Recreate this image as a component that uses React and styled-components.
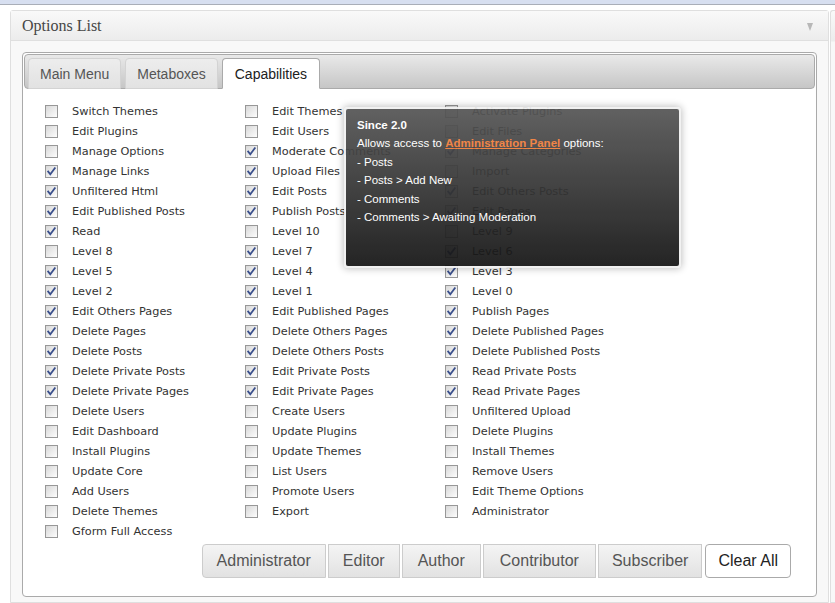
import React from "react";
import styled, { createGlobalStyle } from "styled-components";

const GlobalStyle = createGlobalStyle`
  html, body { margin: 0; padding: 0; background: #fff; }
  body { font-family: "DejaVu Sans", Verdana, sans-serif; }
`;

const Page = styled.div`
  width: 835px;
  height: 603px;
  overflow: hidden;
  display: flex;
  flex-direction: column;
`;

const TopStrip = styled.div`
  height: 4px;
  background: #d7dff0;
  border-bottom: 1px solid #a9aeb8;
  flex: none;
`;

const Stage = styled.div`
  display: flex;
  gap: 1px;
  padding: 5px 0 0 10px;
  flex: 1;
  min-height: 0;
`;

const Panel = styled.div`
  width: 819px;
  box-sizing: border-box;
  border: 1px solid #dfdfdf;
  border-radius: 3px 3px 0 0;
  background: #f8f8f8;
  flex: none;
`;

const SidePanel = styled.div`
  flex: 1;
  border: 1px solid #dfdfdf;
  border-right: none;
  border-radius: 3px 0 0 0;
  background: linear-gradient(#f9f9f9, #ececec 30px, #f8f8f8 31px);
`;

const PanelHeader = styled.div`
  height: 29px;
  border-bottom: 1px solid #dfdfdf;
  background: linear-gradient(#f9f9f9, #ececec);
  display: flex;
  align-items: center;
  justify-content: space-between;
  padding: 0 15px 0 11px;
  font-family: "Liberation Serif", "Times New Roman", serif;
  font-size: 16px;
  color: #464646;
`;

const Arrow = styled.span`
  width: 0;
  height: 0;
  border-left: 3.5px solid transparent;
  border-right: 3.5px solid transparent;
  border-top: 8px solid #b8b8b8;
  margin-top: 2px;
`;

const PanelBody = styled.div`
  padding: 11px 11px 0 11px;
`;

const TabsBox = styled.div`
  position: relative;
  border: 1px solid #aaaaaa;
  border-radius: 4px;
  background: #fff;
  padding: 1px;
`;

const TabBar = styled.div`
  display: flex;
  align-items: flex-end;
  gap: 4px;
  padding: 3px 3px 0;
  border: 1px solid #aaaaaa;
  border-radius: 4px;
  background: linear-gradient(#e9e9e9, #c6c6c6);
`;

const Tab = styled.div`
  height: 31px;
  margin-bottom: -1px;
  box-sizing: border-box;
  display: flex;
  align-items: center;
  padding: 0 ${(p) => (p.$active ? 12 : 11)}px;
  border: 1px solid ${(p) => (p.$active ? "#aaaaaa" : "#d3d3d3")};
  border-bottom: ${(p) => (p.$active ? "1px solid #fff" : "1px solid #d3d3d3")};
  border-radius: 4px 4px 0 0;
  background: ${(p) => (p.$active ? "#fff" : "linear-gradient(#ededed, #e2e2e2)")};
  font-family: "Liberation Sans", Arial, sans-serif;
  font-size: 14px;
  color: ${(p) => (p.$active ? "#212121" : "#555")};
`;

const Content = styled.div`
  padding: 12px 22px 17px 21px;
`;

const Columns = styled.div`
  display: flex;
`;

const Column = styled.div`
  width: 200px;
  display: flex;
  flex-direction: column;
`;

const Item = styled.div`
  height: 20px;
  display: flex;
  align-items: center;
  gap: 14px;
  font-size: 11.3px;
  color: #333;
  white-space: nowrap;
`;

const Box = styled.span`
  width: 13px;
  height: 13px;
  box-sizing: border-box;
  border: 1px solid #979797;
  background: linear-gradient(135deg, #d8d8d8, #f2f2f2 70%, #fdfdfd);
  display: flex;
  align-items: center;
  justify-content: center;
  flex: none;
`;

const Check = () => (
  <svg width="11" height="11" viewBox="0 0 11 11">
    <path d="M2.2 5.6 L4.3 8.2 L8.8 2.2" fill="none" stroke="#3a4f8c" strokeWidth="1.8" strokeLinecap="square" />
  </svg>
);

const Buttons = styled.div`
  display: flex;
  justify-content: flex-end;
  gap: 2px;
  margin-top: 3px;
  padding-right: 2px;
`;

const Btn = styled.div`
  height: 34px;
  box-sizing: border-box;
  display: flex;
  align-items: center;
  padding: 0 ${(p) => p.$pad || 14}px;
  border: 1px solid ${(p) => (p.$plain ? "#aaaaaa" : "#cccccc")};
  border-radius: ${(p) => (p.$plain ? "4px" : p.$first ? "4px 0 0 4px" : "0")};
  background: ${(p) => (p.$plain ? "#fff" : "linear-gradient(#f4f4f4, #e2e2e2)")};
  font-family: "Liberation Sans", Arial, sans-serif;
  font-size: 16px;
  color: ${(p) => (p.$plain ? "#222" : "#555")};
  margin-left: ${(p) => (p.$plain ? "1px" : "0")};
`;

const Tip = styled.div`
  position: absolute;
  left: 321px;
  top: 54px;
  width: 337px;
  height: 161px;
  box-sizing: border-box;
  border: 2px solid #f0f0f0;
  border-radius: 4px;
  background: linear-gradient(#555555, #141414);
  opacity: 0.93;
  box-shadow: 0 0 7px 1px rgba(0, 0, 0, 0.25);
  padding: 7px 11px;
  font-family: "Liberation Sans", Arial, sans-serif;
  font-size: 11.5px;
  color: #fff;
`;

const TipLine = styled.div`
  line-height: 18.4px;
  font-weight: ${(p) => (p.$bold ? "bold" : "normal")};
`;

const TipLink = styled.span`
  color: #f07d3a;
  font-weight: bold;
  text-decoration: underline;
`;

const col1 = [
  ["Switch Themes", 0], ["Edit Plugins", 0], ["Manage Options", 0], ["Manage Links", 1],
  ["Unfiltered Html", 1], ["Edit Published Posts", 1], ["Read", 1], ["Level 8", 0],
  ["Level 5", 1], ["Level 2", 1], ["Edit Others Pages", 1], ["Delete Pages", 1],
  ["Delete Posts", 1], ["Delete Private Posts", 1], ["Delete Private Pages", 1],
  ["Delete Users", 0], ["Edit Dashboard", 0], ["Install Plugins", 0], ["Update Core", 0],
  ["Add Users", 0], ["Delete Themes", 0], ["Gform Full Access", 0],
];
const col2 = [
  ["Edit Themes", 0], ["Edit Users", 0], ["Moderate Comments", 1], ["Upload Files", 1],
  ["Edit Posts", 1], ["Publish Posts", 1], ["Level 10", 0], ["Level 7", 1], ["Level 4", 1],
  ["Level 1", 1], ["Edit Published Pages", 1], ["Delete Others Pages", 1],
  ["Delete Others Posts", 1], ["Edit Private Posts", 1], ["Edit Private Pages", 1],
  ["Create Users", 0], ["Update Plugins", 0], ["Update Themes", 0], ["List Users", 0],
  ["Promote Users", 0], ["Export", 0],
];
const col3 = [
  ["Activate Plugins", 0], ["Edit Files", 0], ["Manage Categories", 1], ["Import", 0],
  ["Edit Others Posts", 1], ["Edit Pages", 1], ["Level 9", 0], ["Level 6", 1], ["Level 3", 1],
  ["Level 0", 1], ["Publish Pages", 1], ["Delete Published Pages", 1],
  ["Delete Published Posts", 1], ["Read Private Posts", 1], ["Read Private Pages", 1],
  ["Unfiltered Upload", 0], ["Delete Plugins", 0], ["Install Themes", 0], ["Remove Users", 0],
  ["Edit Theme Options", 0], ["Administrator", 0],
];

const roles = [
  ["Administrator", 14, true],
  ["Editor", 14],
  ["Author", 15],
  ["Contributor", 16],
  ["Subscriber", 13],
];

export default function App() {
  return (
    <>
      <GlobalStyle />
      <Page>
        <TopStrip />
        <Stage>
          <Panel>
            <PanelHeader>
              <span>Options List</span>
              <Arrow />
            </PanelHeader>
            <PanelBody>
              <TabsBox>
                <TabBar>
                  <Tab>Main Menu</Tab>
                  <Tab>Metaboxes</Tab>
                  <Tab $active>Capabilities</Tab>
                </TabBar>
                <Content>
                  <Columns>
                    {[col1, col2, col3].map((col, ci) => (
                      <Column key={ci}>
                        {col.map(([label, on]) => (
                          <Item key={label}>
                            <Box>{on ? <Check /> : null}</Box>
                            <span>{label}</span>
                          </Item>
                        ))}
                      </Column>
                    ))}
                  </Columns>
                  <Buttons>
                    {roles.map(([r, pad, first]) => (
                      <Btn key={r} $pad={pad} $first={first}>{r}</Btn>
                    ))}
                    <Btn $plain $pad={12}>Clear All</Btn>
                  </Buttons>
                </Content>
                <Tip>
                  <TipLine $bold>Since 2.0</TipLine>
                  <TipLine>
                    Allows access to <TipLink>Administration Panel</TipLink> options:
                  </TipLine>
                  <TipLine>- Posts</TipLine>
                  <TipLine>- Posts &gt; Add New</TipLine>
                  <TipLine>- Comments</TipLine>
                  <TipLine>- Comments &gt; Awaiting Moderation</TipLine>
                </Tip>
              </TabsBox>
            </PanelBody>
          </Panel>
          <SidePanel />
        </Stage>
      </Page>
    </>
  );
}
